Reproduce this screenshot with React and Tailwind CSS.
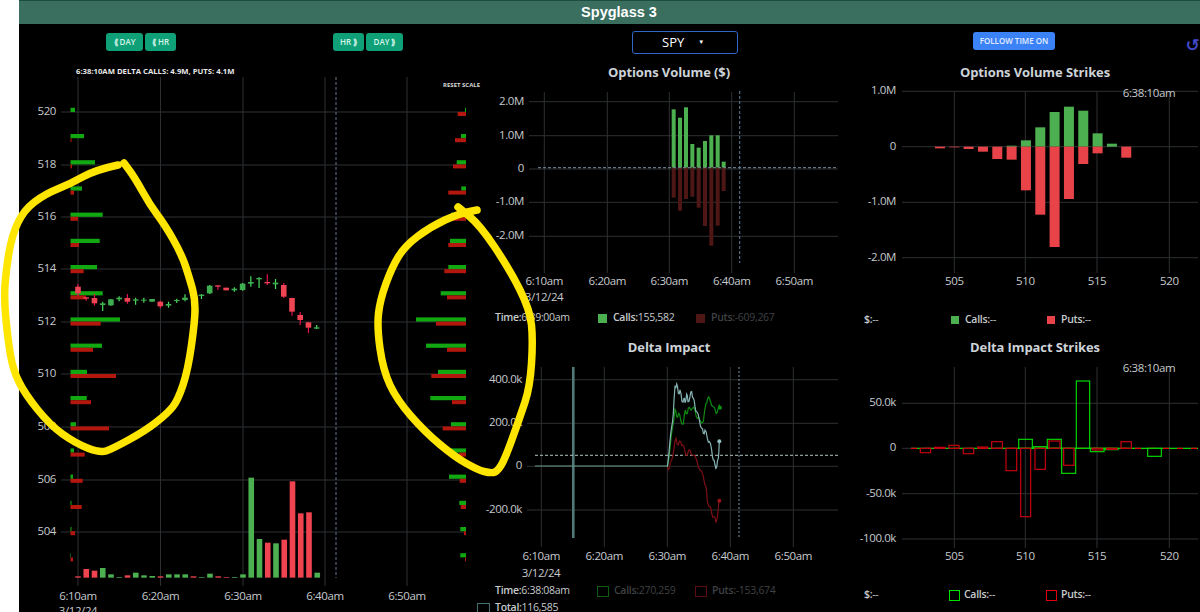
import React from 'react'

const GRID = '#2d3033'
const TICKS = ['6:10am', '6:20am', '6:30am', '6:40am', '6:50am']

// bars are [end of green, end of red] in px, one row per strike from 520 down to 503
const leftDepth = [[75, 0], [84, 71.5], [95, 72], [82, 74], [102.7, 78], [99.7, 79], [97, 83.7], [102.7, 86], [120, 100.7], [102, 93], [87, 116], [86.7, 91], [76, 109], [74, 84.7], [73, 82.7], [71.5, 81.7], [71.5, 75], [71, 73]]
const rightDepth = [[465, 457.7], [461, 455], [456.7, 453], [461.3, 448.3], [451, 444.3], [450, 448.3], [448.3, 444.3], [440.7, 447], [416, 436], [426, 447], [438, 431.3], [430.3, 452], [451, 442.7], [451, 459], [449, 459.7], [459.3, 460.7], [460.3, 464], [460.3, 465]]

// [wick top, wick bottom, body top, body bottom, up]
const candles = [
  [72, 108, 80, 100, 0], [112, 122, 112, 116, 0], [102, 137, 114, 130, 0], [125, 153, 130, 135, 1], [117, 137, 118, 136, 1],
  [109, 124, 113, 118, 1], [102, 131, 114, 125, 0], [113, 134, 118, 122, 1], [113, 128, 119, 122, 1], [117, 125, 117, 125, 1],
  [122, 145, 125, 139, 0], [125, 143, 132, 137, 1], [116, 129, 120, 123, 1], [103, 124, 113, 120, 1], [110, 118, 112, 116, 0],
  [102, 117, 104, 108, 1], [75, 102, 77, 100, 1], [75, 90, 76, 80, 0], [83, 91, 83, 91, 0], [82, 95, 86, 91, 1],
  [69, 92, 71, 90, 1], [49, 80, 66, 71, 1], [52, 84, 54, 58, 1], [43, 75, 66, 70, 0], [57, 87, 68, 73, 1],
  [69, 114, 75, 110, 0], [113, 167, 114, 155, 0], [156, 195, 165, 180, 0], [186, 219, 187, 203, 0], [195, 207, 202, 206, 1],
]

const volume = [[829, 0], [807, 0], [812, 0], [804, 1], [823, 1], [831, 1], [826, 0], [818, 1], [826, 1], [828, 1], [829, 0], [823, 1], [823, 1], [823, 1], [829, 0], [831, 1], [821, 1], [829, 0], [831, 0], [831, 1], [823, 1], [533, 1], [717, 1], [728, 0], [730, 1], [719, 0], [544, 0], [640, 0], [637, 0], [818, 1]]

const optCalls = [[581, 268], [600, 293], [618, 262], [637, 372], [656, 383], [675, 363], [694, 346], [713, 346], [731, 425]]
const optPuts = [533, 572, 537, 530, 563, 618, 677, 617, 513]

const deltaTotal = [[52, 290], [58, 235], [65, 170], [70, 130], [75, 50], [80, 42], [85, 70], [90, 60], [96, 95], [102, 85], [105, 98], [110, 72], [114, 95], [120, 80], [125, 65], [130, 85], [135, 110], [140, 125], [148, 150], [155, 175], [160, 190], [165, 180], [172, 205], [178, 215], [185, 240], [190, 270], [195, 285], [200, 292], [205, 265], [208, 214]]
const deltaCalls = [[52, 290], [60, 235], [68, 170], [75, 118], [80, 140], [86, 130], [92, 150], [100, 162], [106, 120], [112, 130], [118, 112], [128, 115], [135, 120], [142, 145], [150, 150], [160, 155], [168, 100], [173, 85], [180, 90], [190, 110], [198, 130], [205, 112], [210, 113]]
const deltaPuts = [[52, 290], [58, 295], [65, 270], [72, 235], [78, 205], [85, 225], [92, 215], [98, 225], [105, 245], [112, 255], [120, 240], [128, 255], [140, 270], [150, 300], [160, 320], [168, 350], [172, 395], [180, 410], [185, 430], [192, 440], [198, 458], [204, 425], [208, 392]]

const strikeCalls = [[509, 377], [510, 361], [511, 322], [512, 276], [513, 260], [514, 272], [515, 340], [516, 371]]
const strikePuts = [[504, 385], [505, 382], [506, 387], [507, 395], [508, 417], [509, 419], [510, 511], [511, 584], [512, 681], [513, 537], [514, 432], [515, 400], [517, 413]]

// [left, right, y] in zoomed px, the other edge is the zero line at 355
const impactCalls = [[566, 607, 328], [610, 650, 350], [652, 694, 328], [695, 737, 430], [739, 779, 153], [781, 822, 365], [824, 864, 359], [953, 994, 379]]
const impactPuts = [[271, 302, 368], [313, 345, 352], [357, 387, 346], [400, 431, 371], [443, 473, 351], [485, 517, 335], [528, 560, 422], [572, 602, 560], [615, 646, 418], [657, 690, 333], [701, 732, 406], [787, 817, 360], [830, 861, 358], [873, 904, 335]]

const STRIKE_X = [954.3, 1025.3, 1097, 1169.3]

const leftLoop = [[118, 165], [95, 170], [70, 184], [45, 194], [24, 210], [12, 235], [6, 270], [4, 300], [8, 340], [13, 370], [25, 394], [50, 425], [75, 443], [100, 453], [112, 449], [145, 431], [168, 413], [178, 400], [188, 370], [195, 320], [195, 298], [190, 280], [182, 255], [165, 225], [150, 205], [135, 178], [124, 163]]
const rightLoop = [[477, 210], [460, 213], [430, 227], [405, 246], [392, 267], [380, 300], [377, 327], [383, 370], [397, 400], [425, 432], [455, 457], [478, 470], [490, 473], [497, 472], [505, 459], [520, 417], [530, 387], [533, 340], [530, 310], [510, 270], [480, 225], [458, 207]]

function smooth(pts) {
  let d = `M${pts[0][0]} ${pts[0][1]}`
  for (let i = 1; i < pts.length - 1; i++) {
    const mx = (pts[i][0] + pts[i + 1][0]) / 2
    const my = (pts[i][1] + pts[i + 1][1]) / 2
    d += ` Q${pts[i][0]} ${pts[i][1]} ${mx} ${my}`
  }
  const last = pts[pts.length - 1]
  return d + ` L${last[0]} ${last[1]}`
}

// the delta lines tick every few seconds, so split each segment and zig-zag it a little
function jagged(pts) {
  const out = []
  pts.forEach((p, i) => {
    const [x, y] = [650 + p[0] / 3, 370 + p[1] / 3]
    if (i > 0) {
      const [px, py] = [650 + pts[i - 1][0] / 3, 370 + pts[i - 1][1] / 3]
      out.push(`${(x + px) / 2},${(y + py) / 2 + (i % 2 ? 2.2 : -2.2)}`)
    }
    out.push(`${x},${y}`)
  })
  return out.join(' ')
}

function Label({x, y, anchor = 'middle', children}) {
  return (
    <text x={x} y={y} textAnchor={anchor} dominantBaseline="middle" className="fill-[#c6cacd] text-[11.5px] tracking-[-0.4px]">
      {children}
    </text>
  )
}

function Grid({xs, ys, x1, x2, y1, y2}) {
  return (
    <g stroke={GRID} strokeWidth="1">
      {xs.map(x => <line key={x} x1={x} x2={x} y1={y1} y2={y2} />)}
      {ys.map(y => <line key={y} x1={x1} x2={x2} y1={y} y2={y} />)}
    </g>
  )
}

function PriceChart() {
  const xs = [78, 160.5, 243, 325, 407]
  const ys = [112, 165, 217, 269, 322, 374, 427, 480, 532]
  const prices = [520, 518, 516, 514, 512, 510, 508, 506, 504]
  return (
    <svg width="458" height="536" viewBox="19 76 458 536" className="block">
      <Grid xs={xs} ys={ys} x1={61} x2={466} y1={77} y2={586} />
      <line x1="336" x2="336" y1="77" y2="578" stroke="#64748b" strokeDasharray="3 2" />
      {prices.map((p, i) => <Label key={p} x={56} y={ys[i]} anchor="end">{p}</Label>)}
      {TICKS.map((t, i) => <Label key={t} x={xs[i]} y={597}>{t}</Label>)}
      <Label x={78} y={612}>3/12/24</Label>

      {leftDepth.map(([g, r], i) => {
        const y = 110 + 26.2 * i
        return (
          <g key={i}>
            <rect x="70.5" y={y - 2.2} width={g - 70.5} height="4.2" fill="#12a812" />
            {r > 0 && <rect x="70.5" y={y + 2} width={r - 70.5} height="4" fill="#b3170e" />}
          </g>
        )
      })}
      {rightDepth.map(([g, r], i) => {
        const y = 110 + 26.2 * i
        return (
          <g key={i}>
            <rect x={g} y={y - 2.2} width={466 - g} height="4.2" fill="#12a812" />
            <rect x={r} y={y + 2} width={466 - r} height="4" fill="#b3170e" />
          </g>
        )
      })}

      {volume.map(([top, up], i) => (
        <rect key={i} x={75.2 + 8.25 * i} y={300 + top / 3} width="5.6" height={(833 - top) / 3} fill={up ? '#4caf50' : '#ef4450'} />
      ))}

      {candles.map(([wt, wb, bt, bb, up], i) => {
        const x = 78 + 8.23 * i
        return (
          <g key={i}>
            <line x1={x} x2={x} y1={260 + wt / 3} y2={260 + wb / 3} stroke={up ? '#4ade60' : '#e6104f'} strokeWidth="1.2" />
            <rect x={x - 2.8} y={260 + bt / 3} width="5.6" height={(bb - bt) / 3} fill={up ? '#3fae50' : '#ef4453'} />
          </g>
        )
      })}
    </svg>
  )
}

function VolumeChart() {
  const xs = [544.3, 607.3, 669.3, 731.7, 794.3]
  const ys = [101.7, 135.7, 169, 202.3, 236.3]
  const labels = ['2.0M', '1.0M', '0', '-1.0M', '-2.0M']
  return (
    <svg width="361" height="227" viewBox="477 82 361 227" className="block">
      <Grid xs={xs} ys={ys} x1={529} x2={838} y1={92} y2={273} />
      {labels.map((l, i) => <Label key={l} x={524} y={ys[i]} anchor="end">{l}</Label>)}
      {TICKS.map((t, i) => <Label key={t} x={xs[i]} y={282}>{t}</Label>)}
      <Label x={544} y={298}>3/12/24</Label>
      {optCalls.map(([x, top], i) => (
        <g key={x}>
          <rect x={480 + x / 3 - 2} y={20 + top / 3} width="4" height={(443 - top) / 3} fill="#4caf50" />
          <rect x={480 + x / 3 - 2} y={20 + 443 / 3} width="4" height={(optPuts[i] - 443) / 3} fill="#4f1616" />
        </g>
      ))}
      <line x1="538" x2="838" y1="167.7" y2="167.7" stroke="#7d8f9c" strokeDasharray="3 2" />
      <line x1="739.7" x2="739.7" y1="91" y2="263" stroke="#5f7f99" strokeDasharray="3 2" />
    </svg>
  )
}

function ImpactChart() {
  const xs = [541.3, 604.3, 667.3, 730.3, 793.3]
  const ys = [379.7, 423.3, 466.3, 510]
  const labels = ['400.0k', '200.0k', '0', '-200.0k']
  const dot = p => ({cx: 650 + p[0] / 3, cy: 370 + p[1] / 3})
  return (
    <svg width="361" height="225" viewBox="477 357 361 225" className="block">
      <Grid xs={xs} ys={ys} x1={527} x2={838} y1={367} y2={547} />
      {labels.map((l, i) => <Label key={l} x={522} y={ys[i]} anchor="end">{l}</Label>)}
      {TICKS.map((t, i) => <Label key={t} x={xs[i]} y={557}>{t}</Label>)}
      <Label x={541} y={574}>3/12/24</Label>
      <line x1="573.3" x2="573.3" y1="367" y2="538" stroke="#4f7a78" strokeWidth="2.6" />
      <line x1="535" x2="838" y1="455.3" y2="455.3" stroke="#b4c4c4" strokeDasharray="3 2" />
      <line x1="739" x2="739" y1="367" y2="539" stroke="#7d97a6" strokeDasharray="2 2" />
      <line x1="535" x2="667" y1="466" y2="466" stroke="#6d9a84" />
      <polyline points={jagged(deltaPuts)} fill="none" stroke="#7d0f14" strokeWidth="1.2" />
      <polyline points={jagged(deltaCalls)} fill="none" stroke="#0f8a12" strokeWidth="1.2" />
      <polyline points={jagged(deltaTotal)} fill="none" stroke="#86b3b3" strokeWidth="1.2" />
      <circle {...dot(deltaTotal[deltaTotal.length - 1])} r="2" fill="#8fbcbc" />
      <circle {...dot(deltaCalls[deltaCalls.length - 1])} r="2" fill="#0f8a12" />
      <circle {...dot(deltaPuts[deltaPuts.length - 1])} r="2" fill="#9c1218" />
    </svg>
  )
}

function VolumeStrikes() {
  const ys = [91.3, 146.7, 202.3, 257.7]
  const labels = ['1.0M', '0', '-1.0M', '-2.0M']
  const sx = s => 954.3 + (s - 505) * 14.33
  return (
    <svg width="362" height="229" viewBox="838 82 362 229" className="block">
      <Grid xs={STRIKE_X} ys={ys} x1={902} x2={1198} y1={92} y2={273} />
      {labels.map((l, i) => <Label key={l} x={896} y={ys[i]} anchor="end">{l}</Label>)}
      {[505, 510, 515, 520].map((s, i) => <Label key={s} x={STRIKE_X[i]} y={282}>{s}</Label>)}
      {strikeCalls.map(([s, top]) => (
        <rect key={s} x={sx(s) - 5} y={20 + top / 3} width="10" height={(380 - top) / 3} fill="#4caf50" />
      ))}
      {strikePuts.map(([s, bottom]) => (
        <rect key={s} x={sx(s) - 5} y={20 + 380 / 3} width="10" height={(bottom - 380) / 3} fill="#e9434a" />
      ))}
      <Label x={1149} y={94}>6:38:10am</Label>
    </svg>
  )
}

function ImpactStrikes() {
  const ys = [403.3, 448.3, 493.7, 539]
  const labels = ['50.0k', '0', '-50.0k', '-100.0k']
  const box = ([l, r, y], color, key) => (
    <rect
      key={key}
      x={830 + l / 3}
      y={330 + Math.min(y, 355) / 3}
      width={(r - l) / 3}
      height={Math.abs(355 - y) / 3}
      fill="none"
      stroke={color}
      strokeWidth="1.2"
    />
  )
  return (
    <svg width="362" height="229" viewBox="838 357 362 229" className="block">
      <Grid xs={STRIKE_X} ys={ys} x1={902} x2={1198} y1={367} y2={548} />
      {labels.map((l, i) => <Label key={l} x={896} y={ys[i]} anchor="end">{l}</Label>)}
      {[505, 510, 515, 520].map((s, i) => <Label key={s} x={STRIKE_X[i]} y={557}>{s}</Label>)}
      <line x1="911" x2="1198" y1="448.3" y2="448.3" stroke="#00d400" strokeWidth="1.3" />
      <line x1="911" x2="1198" y1="448.3" y2="448.3" stroke="#e00012" strokeWidth="1.3" strokeDasharray="6 8" />
      {impactCalls.map((b, i) => box(b, '#00d400', i))}
      {impactPuts.map((b, i) => box(b, '#c40012', i))}
      <Label x={1149} y={369}>6:38:10am</Label>
    </svg>
  )
}

function GreenButton({children}) {
  return (
    <button className="h-[18px] rounded-[3px] bg-[#10a077] text-[8px] font-semibold text-[#d5f5ea]">
      {children}
    </button>
  )
}

function Title({className, children}) {
  return (
    <div className={`h-5 text-center text-[13px] leading-5 font-bold tracking-[-0.1px] text-[#cdd3d8] ${className}`}>
      {children}
    </div>
  )
}

function Entry({width, swatch, label, value, dim}) {
  return (
    <div className={`flex items-center ${width}`}>
      {swatch}
      <span className={dim ? 'text-[#3f4245]' : 'text-[#c6cacd]'}>
        <b className="font-semibold">{label}</b>{value}
      </span>
    </div>
  )
}

export default function App() {
  return (
    <div className="relative flex h-[612px] w-[1200px] overflow-hidden bg-white font-['Open_Sans',sans-serif]">
      <div className="w-[19px] shrink-0" />
      <div className="flex min-w-0 flex-1 flex-col bg-black">
        <div className="h-6 shrink-0 border-t border-t-[#1d4d40] bg-[#3a6e5f] pl-[19px] text-center font-['Liberation_Sans',sans-serif] text-[14.5px] leading-[22px] font-bold text-white">
          Spyglass 3
        </div>
        <div className="grid flex-1 grid-cols-[458px_361px_362px]">
          <div className="relative">
            <div className="flex h-[42px] pt-[9px] pr-[74px] pl-[87px]">
              <div className="flex gap-[2px]">
                <GreenButton><span className="block w-[37px]">⟪ DAY</span></GreenButton>
                <GreenButton><span className="block w-[31px]">⟪ HR</span></GreenButton>
              </div>
              <div className="ml-auto flex gap-[2px]">
                <GreenButton><span className="block w-[31px]">HR ⟫</span></GreenButton>
                <GreenButton><span className="block w-[37px]">DAY ⟫</span></GreenButton>
              </div>
            </div>
            <div className="h-[10px] pl-[57px] text-[7.7px] leading-[10px] font-bold whitespace-nowrap text-[#e8e8e8]">
              6:38:10AM DELTA CALLS: 4.9M, PUTS: 4.1M
            </div>
            <PriceChart />
            <div className="absolute top-[57px] left-[424px] text-[6px] leading-2 font-bold whitespace-nowrap text-[#d8d8d8]">
              RESET SCALE
            </div>
          </div>

          <div>
            <div className="h-[38px] pt-[7px] pl-[155px]">
              <div className="flex h-[23px] w-[106px] items-center rounded-[3px] border-[1.5px] border-[#2f66c8] pl-[29px] text-[13px] text-white">
                SPY
                <span className="ml-[14px] text-[6px]">▼</span>
              </div>
            </div>
            <Title className="pl-[23px]">Options Volume ($)</Title>
            <VolumeChart />
            <div className="flex h-[18px] items-center pl-[18px] text-[10.5px] tracking-[-0.3px] whitespace-nowrap">
              <Entry width="w-[103px]" label="Time:" value="6:39:00am" />
              <Entry width="w-[98px]" swatch={<i className="mr-[6px] h-[9px] w-[9px] bg-[#4caf50]" />} label="Calls:" value="155,582" />
              <Entry dim swatch={<i className="mr-[6px] h-[9px] w-[9px] bg-[#4f1616]" />} label="Puts:" value="-609,267" />
            </div>
            <Title className="mt-[10px] pl-[23px]">Delta Impact</Title>
            <ImpactChart />
            <div className="flex h-[18px] items-center pl-[18px] text-[10.5px] tracking-[-0.3px] whitespace-nowrap">
              <Entry width="w-[102px]" label="Time:" value="6:38:08am" />
              <Entry width="w-[98px]" dim swatch={<i className="mr-[5px] h-[11px] w-3 border border-[#0d5c12]" />} label="Calls:" value="270,259" />
              <Entry dim swatch={<i className="mr-[5px] h-[11px] w-3 border border-[#5c0d12]" />} label="Puts:" value="-153,674" />
            </div>
            <div className="flex h-4 items-center text-[10.5px] tracking-[-0.3px] whitespace-nowrap">
              <Entry swatch={<i className="mr-[5px] h-[11px] w-[13px] border border-[#3f6f6f]" />} label="Total:" value="116,585" />
            </div>
          </div>

          <div>
            <div className="flex h-[38px] pt-2 pl-[135px]">
              <button className="h-[18px] w-[82px] rounded-[3px] bg-[#3b82f6] text-[8px] font-semibold text-[#e3edff]">
                FOLLOW TIME ON
              </button>
              <span className="mt-1 ml-auto font-['DejaVu_Sans',sans-serif] text-[17px] leading-[18px] font-bold text-[#4348c8]">↺</span>
            </div>
            <Title className="pl-8">Options Volume Strikes</Title>
            <VolumeStrikes />
            <div className="flex h-[18px] items-center pl-[26px] text-[10.5px] tracking-[-0.3px] whitespace-nowrap">
              <Entry width="w-[87px]" label="$:" value="--" />
              <Entry width="w-[96px]" swatch={<i className="mr-[6px] h-2 w-2 bg-[#4caf50]" />} label="Calls:" value="--" />
              <Entry swatch={<i className="mr-[6px] h-2 w-2 bg-[#e9434a]" />} label="Puts:" value="--" />
            </div>
            <Title className="mt-2 pl-8">Delta Impact Strikes</Title>
            <ImpactStrikes />
            <div className="flex h-[18px] items-center pl-[26px] text-[10.5px] tracking-[-0.3px] whitespace-nowrap">
              <Entry width="w-[85px]" label="$:" value="--" />
              <Entry width="w-[97px]" swatch={<i className="mr-[4px] h-[11px] w-[11px] border-[1.5px] border-[#00e000]" />} label="Calls:" value="--" />
              <Entry swatch={<i className="mr-[4px] h-[11px] w-[11px] border-[1.5px] border-[#e00012]" />} label="Puts:" value="--" />
            </div>
          </div>
        </div>
      </div>

      {/* hand drawn marker loops on top of the screenshot */}
      <svg viewBox="0 0 1200 612" className="pointer-events-none absolute inset-0 h-full w-full">
        <path d={smooth(leftLoop)} fill="none" stroke="#ffe600" strokeWidth="7.5" strokeLinecap="round" strokeLinejoin="round" />
        <path d={smooth(rightLoop)} fill="none" stroke="#ffe600" strokeWidth="7.5" strokeLinecap="round" strokeLinejoin="round" />
      </svg>
    </div>
  )
}
